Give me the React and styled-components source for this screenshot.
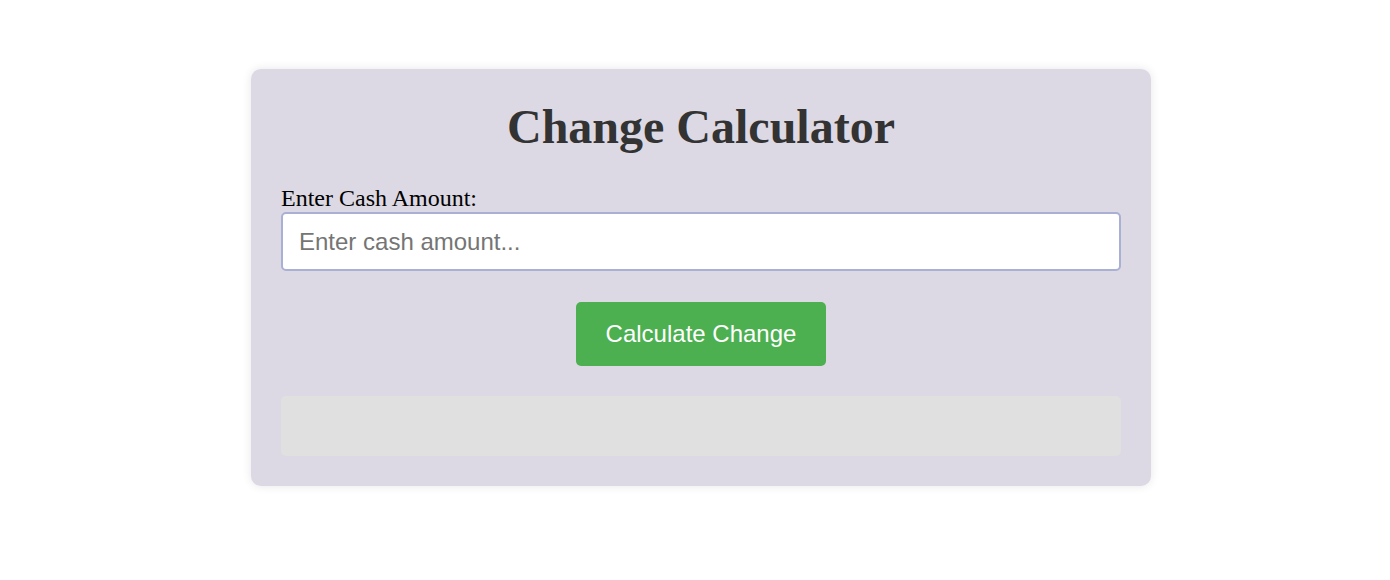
import React, { useState } from "react";
import styled, { createGlobalStyle } from "styled-components";

const GlobalStyle = createGlobalStyle`
  body {
    margin: 0;
    background: #ffffff;
    font-family: "Liberation Serif", "Times New Roman", serif;
  }
`;

const Page = styled.div`
  display: flex;
  justify-content: center;
  padding: 69px 0 40px 12px;
`;

const Card = styled.div`
  width: 900px;
  box-sizing: border-box;
  padding: 30px;
  background: #dcd9e4;
  border-radius: 10px;
  box-shadow: 0 0 10px rgba(0, 0, 0, 0.1);
`;

const Title = styled.h1`
  margin: 0 0 31px;
  text-align: center;
  font-size: 48px;
  font-weight: bold;
  color: #333333;
`;

const Label = styled.label`
  display: block;
  font-size: 24px;
  line-height: 27px;
  color: #000;
`;

const Input = styled.input`
  display: block;
  width: 100%;
  height: 59px;
  box-sizing: border-box;
  padding: 0 16px;
  font-family: "Liberation Sans", Arial, sans-serif;
  font-size: 24px;
  border: 2px solid #aab0d4;
  border-radius: 5px;
  background: #fff;
  color: #333;
  outline: none;

  &::placeholder {
    color: #757575;
  }
`;

const Actions = styled.div`
  display: flex;
  justify-content: center;
  margin-top: 31px;
`;

const Button = styled.button`
  width: 250px;
  height: 64px;
  border: none;
  border-radius: 5px;
  background: #4caf50;
  color: #fff;
  font-family: "Liberation Sans", Arial, sans-serif;
  font-size: 24px;
  cursor: pointer;
`;

const Result = styled.div`
  margin-top: 30px;
  height: 60px;
  background: #e0e0e0;
  border-radius: 5px;
`;

export default function App() {
  const [cash, setCash] = useState("");

  return (
    <>
      <GlobalStyle />
      <Page>
        <Card>
          <Title>Change Calculator</Title>
          <Label htmlFor="cash">Enter Cash Amount:</Label>
          <Input
            id="cash"
            type="text"
            placeholder="Enter cash amount..."
            value={cash}
            onChange={(e) => setCash(e.target.value)}
          />
          <Actions>
            <Button type="button">Calculate Change</Button>
          </Actions>
          <Result />
        </Card>
      </Page>
    </>
  );
}
